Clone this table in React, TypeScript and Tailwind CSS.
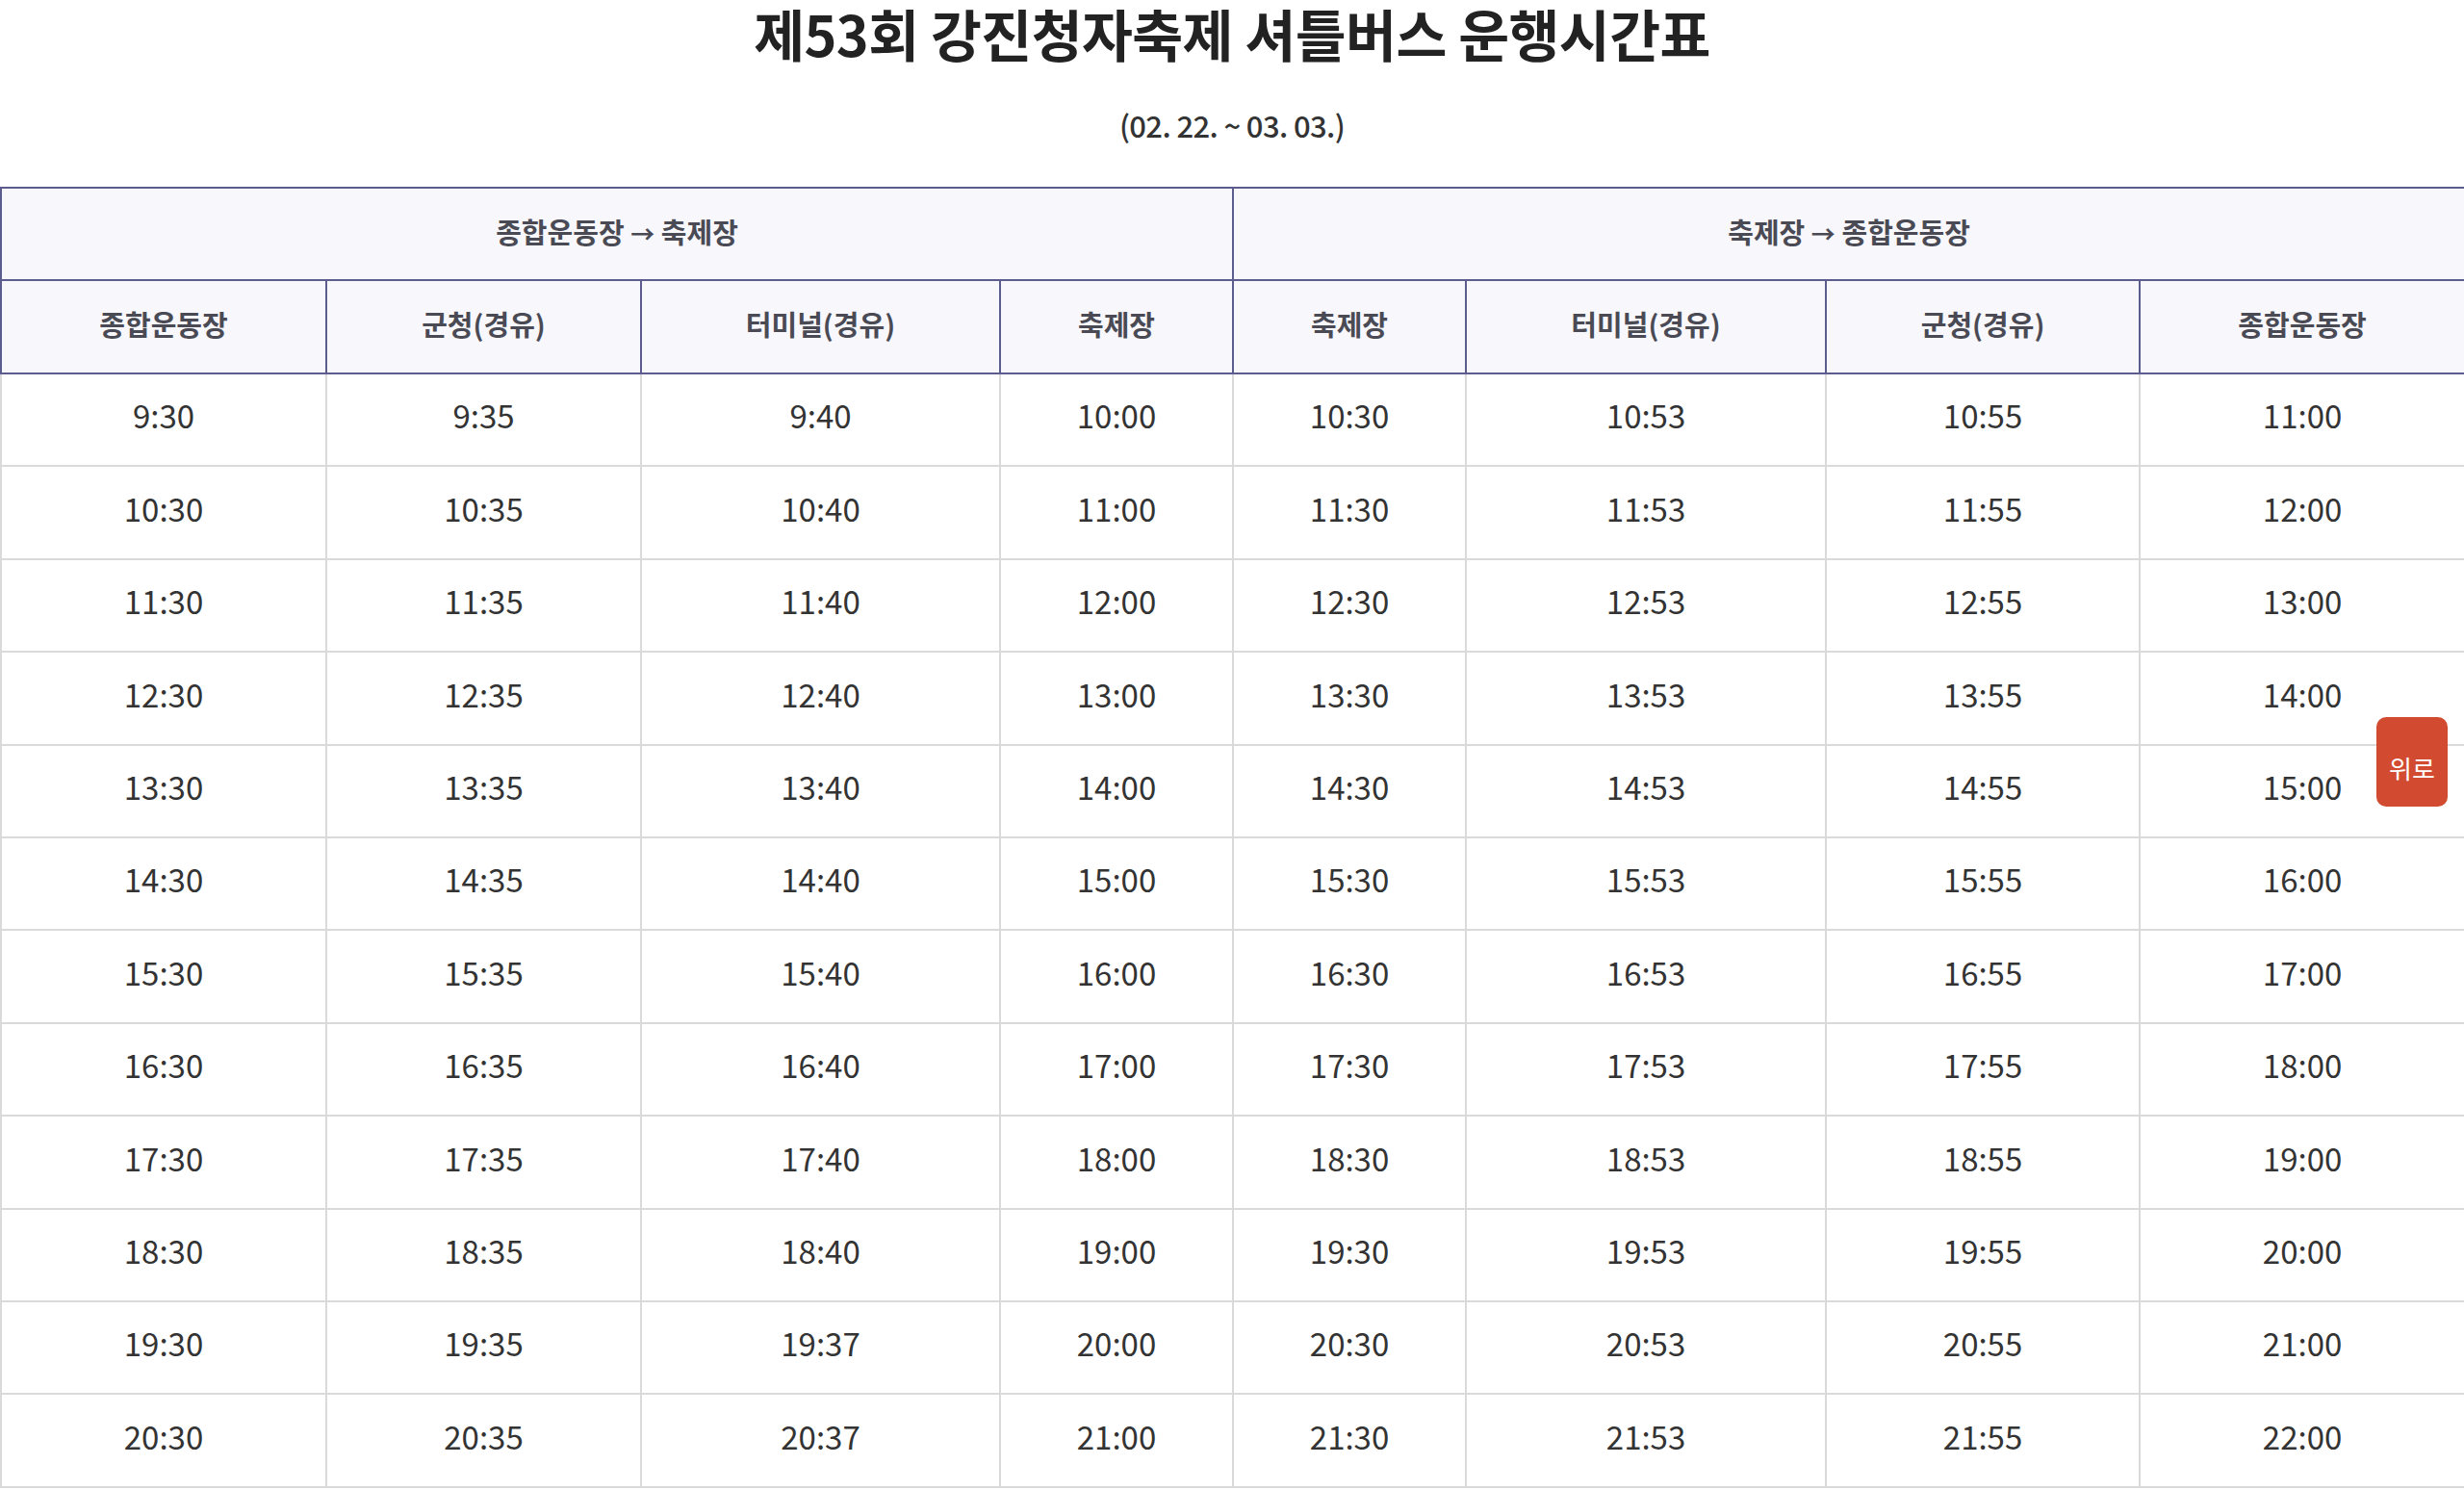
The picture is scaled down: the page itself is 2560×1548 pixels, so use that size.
const font = "font-['Noto_Sans_CJK_KR','Noto_Sans',sans-serif]";

const cols = [
  "w-[338px]",
  "w-[327px]",
  "w-[373px]",
  "w-[242px]",
  "w-[242px]",
  "w-[374px]",
  "w-[326px]",
  "w-[338px]",
];

const subHeads = ["종합운동장", "군청(경유)", "터미널(경유)", "축제장", "축제장", "터미널(경유)", "군청(경유)", "종합운동장"];

const rows: string[][] = [
  ["9:30", "9:35", "9:40", "10:00", "10:30", "10:53", "10:55", "11:00"],
  ["10:30", "10:35", "10:40", "11:00", "11:30", "11:53", "11:55", "12:00"],
  ["11:30", "11:35", "11:40", "12:00", "12:30", "12:53", "12:55", "13:00"],
  ["12:30", "12:35", "12:40", "13:00", "13:30", "13:53", "13:55", "14:00"],
  ["13:30", "13:35", "13:40", "14:00", "14:30", "14:53", "14:55", "15:00"],
  ["14:30", "14:35", "14:40", "15:00", "15:30", "15:53", "15:55", "16:00"],
  ["15:30", "15:35", "15:40", "16:00", "16:30", "16:53", "16:55", "17:00"],
  ["16:30", "16:35", "16:40", "17:00", "17:30", "17:53", "17:55", "18:00"],
  ["17:30", "17:35", "17:40", "18:00", "18:30", "18:53", "18:55", "19:00"],
  ["18:30", "18:35", "18:40", "19:00", "19:30", "19:53", "19:55", "20:00"],
  ["19:30", "19:35", "19:37", "20:00", "20:30", "20:53", "20:55", "21:00"],
  ["20:30", "20:35", "20:37", "21:00", "21:30", "21:53", "21:55", "22:00"],
];

function RouteHead({ from, to }: { from: string; to: string }) {
  return (
    <th colSpan={4} className="border-2 border-[#5c5c8e] pb-[5px] text-[29px] font-semibold text-[#4a4a55]">
      {from} <span className="text-[25px]">→</span> {to}
    </th>
  );
}

export default function App() {
  return (
    <div className={`${font} min-h-screen bg-white text-[#333]`}>
      <h1 className="pt-[2px] text-center text-[57.5px] font-bold leading-[64px] tracking-[-0.01em] text-[#222]">
        제53회 강진청자축제 셔틀버스 운행시간표
      </h1>
      <p className="mt-[44px] text-center text-[31px] font-medium leading-[40px] tracking-[-0.02em] text-[#333]">
        (02. 22. ~ 03. 03.)
      </p>

      <table className="mt-[44px] w-full table-fixed border-collapse text-center">
        <colgroup>
          {cols.map((c, i) => (
            <col key={i} className={c} />
          ))}
        </colgroup>
        <thead>
          <tr className="h-[96px] bg-[#f7f7fc]">
            <RouteHead from="종합운동장" to="축제장" />
            <RouteHead from="축제장" to="종합운동장" />
          </tr>
          <tr className="h-[97px] bg-[#f7f7fc]">
            {subHeads.map((h, i) => (
              <th key={i} className="border-2 border-[#5c5c8e] pb-[5px] text-[29px] font-semibold text-[#4a4a55]">
                {h}
              </th>
            ))}
          </tr>
        </thead>
        <tbody>
          {rows.map((r, ri) => (
            <tr key={ri} className="h-[96.4px]">
              {r.map((t, ci) => (
                <td key={ci} className="border-2 border-[#dadada] pb-[8px] text-[33px] font-normal text-[#333]">
                  {t}
                </td>
              ))}
            </tr>
          ))}
        </tbody>
      </table>

      <button className="fixed right-[17px] top-[745px] flex h-[93px] w-[74px] items-center justify-center rounded-[10px] bg-[#d24b31] pt-[12px] text-[26px] text-white">
        위로
      </button>
    </div>
  );
}
